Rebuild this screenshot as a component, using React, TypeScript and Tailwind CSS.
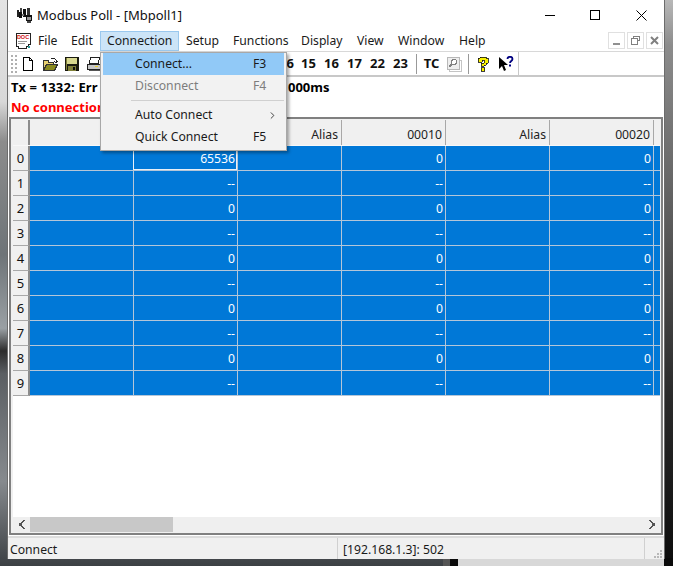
import { ChevronRight } from 'lucide-react'

const uiFont = "font-['Noto_Sans','Open_Sans',sans-serif]"

const menus = [
  { label: 'File', width: 'w-[33px]' },
  { label: 'Edit', width: 'w-[35px]' },
  { label: 'Connection', width: 'w-[79px]', active: true },
  { label: 'Setup', width: 'w-[47px] ml-px' },
  { label: 'Functions', width: 'w-[68px]' },
  { label: 'Display', width: 'w-[56px]' },
  { label: 'View', width: 'w-[41px]' },
  { label: 'Window', width: 'w-[61px]' },
  { label: 'Help', width: 'w-[39px]' },
]

const funcCodes = ['15', '16', '17', '22', '23']

// the first two headers are behind the open menu
const columns = ['', '', 'Alias', '00010', 'Alias', '00020']

// values only sit in the numeric columns
const rows = [0, 1, 2, 3, 4, 5, 6, 7, 8, 9].map((i) => {
  const empty = i % 2 === 1
  return { id: i, value: empty ? '--' : i === 0 ? '65536' : '0', other: empty ? '--' : '0' }
})

function AppIcon() {
  return (
    <svg width="17" height="17" viewBox="0 0 17 17" shapeRendering="crispEdges">
      <rect x="1" y="3" width="2" height="7" fill="#222" />
      <rect x="3" y="5" width="3" height="6" fill="#111" />
      <rect x="4" y="1" width="2" height="4" fill="#444" />
      <rect x="7" y="2" width="3" height="8" fill="#111" />
      <rect x="6" y="7" width="2" height="2" fill="#777" />
      <rect x="11" y="1" width="3" height="7" fill="#333" />
      <rect x="10" y="8" width="6" height="6" fill="#111" />
      <rect x="11" y="10" width="4" height="3" fill="#999" />
      <rect x="11" y="14" width="4" height="2" fill="#444" />
    </svg>
  )
}

function DocIcon() {
  return (
    <svg width="16" height="17" viewBox="0 0 16 17" shapeRendering="crispEdges">
      <path d="M1 1h14v11h-2v2h-2v2H3v-2H1z" fill="#fff" stroke="#222" />
      <text x="8" y="7" textAnchor="middle" fontSize="5.5" fontWeight="700" fill="#d01010" fontFamily="Liberation Sans">DOC</text>
      <rect x="3" y="9" width="9" height="1" fill="#999" />
      <rect x="3" y="11" width="7" height="1" fill="#999" />
      <rect x="13" y="14" width="2" height="2" fill="#2a9a9a" />
    </svg>
  )
}

function NewIcon() {
  return (
    <svg width="16" height="16" viewBox="0 0 16 16" shapeRendering="crispEdges">
      <path d="M3.5 1.5h6l3 3v10h-9z" fill="#fff" stroke="#000" />
      <path d="M9.5 1.5v3h3" fill="none" stroke="#000" />
    </svg>
  )
}

function OpenIcon() {
  return (
    <svg width="16" height="16" viewBox="0 0 16 16" shapeRendering="crispEdges">
      <path d="M1.5 4.5h5v2h5v8h-10z" fill="#e8d070" stroke="#333" />
      <path d="M1.5 14.5l3-6h11l-3 6z" fill="#8a8a20" stroke="#333" />
      <path d="M9 2h3l2 2v3M14 7l-2-2M14 7l2-2" fill="none" stroke="#222" />
    </svg>
  )
}

function SaveIcon() {
  return (
    <svg width="16" height="16" viewBox="0 0 16 16" shapeRendering="crispEdges">
      <rect x="1" y="1" width="14" height="14" fill="#1a1a10" />
      <rect x="3" y="2" width="10" height="6" fill="#d8d890" />
      <rect x="2" y="2" width="1" height="12" fill="#80803a" />
      <rect x="4" y="10" width="8" height="5" fill="#80803a" />
      <rect x="9" y="11" width="2" height="3" fill="#111" />
    </svg>
  )
}

function PrintIcon() {
  return (
    <svg width="16" height="16" viewBox="0 0 16 16" shapeRendering="crispEdges">
      <path d="M4.5 1.5h9l-1 6h-9z" fill="#fff" stroke="#222" />
      <path d="M1.5 8.5h13v5h-13z" fill="#c8c8c8" stroke="#222" />
      <rect x="9" y="10" width="3" height="1" fill="#e8d030" />
      <path d="M3 14.5h11" stroke="#555" />
    </svg>
  )
}

function PreviewIcon() {
  return (
    <svg width="16" height="16" viewBox="0 0 16 16" shapeRendering="crispEdges">
      <rect x="1.5" y="1.5" width="12" height="12" fill="#eee" stroke="#b8b8b8" />
      <path d="M13.5 4.5h2v11h-12v-2" fill="none" stroke="#c4c4c4" />
      <circle cx="8" cy="6" r="2.5" fill="#fff" stroke="#808080" />
      <path d="M6 8l-3 3" stroke="#808080" strokeWidth="1.5" />
    </svg>
  )
}

function HelpIcon() {
  return (
    <svg width="12" height="16" viewBox="0 0 12 16" shapeRendering="crispEdges">
      <path d="M3 1h6v1h2v5H9v2H7v1H4V7h3V4H5v2H1V2h2z" fill="#f8f000" stroke="#111" strokeWidth="0.8" />
      <rect x="4" y="11.5" width="3.5" height="3.5" fill="#f8f000" stroke="#111" strokeWidth="0.8" />
    </svg>
  )
}

function CursorHelpIcon() {
  return (
    <svg width="16" height="16" viewBox="0 0 16 16">
      <path d="M1 1v12l3-3 2 5 2-1-2-5h4z" fill="#000" />
      <path d="M9.5 3c0-3 5-3 5 0 0 2-2.500 2-2.500 4" fill="none" stroke="#000080" strokeWidth="1.800" />
      <rect x="11" y="8.500" width="2" height="2" fill="#000080" />
    </svg>
  )
}

function GripDots() {
  const dots = [[6, 0], [3, 3], [6, 3], [0, 6], [3, 6], [6, 6]]
  return (
    <svg width="8" height="8" viewBox="0 0 8 8" shapeRendering="crispEdges">
      {dots.map(([x, y]) => (
        <rect key={`${x}-${y}`} x={x} y={y} width="2" height="2" fill="#b8b8b8" />
      ))}
    </svg>
  )
}

function ConnectionMenu() {
  return (
    <div className={`absolute left-[100px] top-[52px] z-10 w-[187px] h-[99px] bg-[#f2f2f2] border border-[#a8a8a8] px-[2px] shadow-[2px_2px_3px_rgba(0,0,0,0.35)] text-[12.200px] text-[#1a1a1a] ${uiFont}`}>
      <div className="h-[22px] flex items-center bg-[#91c9f7] pl-[32px]">
        <span className="w-[118px]">Connect...</span>
        <span>F3</span>
      </div>
      <div className="h-[22px] flex items-center pl-[32px] text-[#7d7d7d]">
        <span className="w-[118px]">Disconnect</span>
        <span>F4</span>
      </div>
      <div className="h-[7px] ml-[28px] flex items-center">
        <div className="w-full h-px bg-[#d0d0d0]" />
      </div>
      <div className="h-[22px] flex items-center pl-[32px]">
        <span className="w-[132px]">Auto Connect</span>
        <ChevronRight size={11} strokeWidth={2} className="text-[#333]" />
      </div>
      <div className="h-[22px] flex items-center pl-[32px]">
        <span className="w-[118px]">Quick Connect</span>
        <span>F5</span>
      </div>
    </div>
  )
}

function DataGrid() {
  return (
    <div className={`flex-1 min-h-0 flex flex-col bg-white text-[12.200px] ${uiFont}`}>
      {/* header row */}
      <div className="flex h-[26px] shrink-0 border-b border-[#f8f8f8]">
        <div className="w-[17px] bg-[#f0f0f0] border-r-2 border-[#8c8c8c]" />
        {columns.map((col, i) => (
          <div key={i} className="w-[104px] bg-[#f0f0f0] border-r border-[#a8a8a8] flex items-center justify-end pr-[3px] pt-[6px] text-[#222]">
            {col}
          </div>
        ))}
        <div className="flex-1 bg-[#f0f0f0]" />
      </div>
      {/* data rows */}
      {rows.map((row) => (
        <div key={row.id} className="flex h-[25px] shrink-0">
          <div className="w-[17px] bg-[#f0f0f0] border-r-2 border-b border-r-[#8c8c8c] border-b-[#a8a8a8] flex items-center justify-center pt-[2px] text-[13px] text-[#111]">
            {row.id}
          </div>
          {columns.map((col, i) => {
            const numeric = i % 2 === 1
            const text = numeric ? (i === 1 ? row.value : row.other) : ''
            const focused = row.id === 0 && i === 1
            return (
              <div key={i} className="w-[104px] bg-[#0078d7] border-r border-b border-[#b4c6d8] flex items-center justify-end pr-[2px] pt-[2px] text-white relative">
                {focused && <div className="absolute inset-0 -left-px border border-[#e8f0f8]" />}
                {text}
              </div>
            )
          })}
          <div className="flex-1 bg-[#0078d7] border-b border-[#b4c6d8]" />
        </div>
      ))}
      <div className="flex-1" />
      {/* scroll bar */}
      <div className="h-[15px] shrink-0 flex bg-[#efefef]">
        <div className="w-[17px] flex items-center justify-center text-[#555]">
          <svg width="8" height="9" viewBox="0 0 8 9" shapeRendering="crispEdges">
            <path d="M5 0h2v1H6v1H5v1H4v3h1v1h1v1h1v1H5V8H4V7H3V6H1V3h2V2h1V1h1z" fill="#555" />
          </svg>
        </div>
        <div className="w-[143px] bg-[#c8c8c8]" />
        <div className="flex-1" />
        <div className="w-[16px] flex items-center justify-center">
          <svg width="8" height="9" viewBox="0 0 8 9" shapeRendering="crispEdges">
            <path d="M1 0h2v1h1v1h1v1h2v3H5v1H4v1H3v1H1V8h1V7h1V6h1V3H3V2H2V1H1z" fill="#555" />
          </svg>
        </div>
      </div>
    </div>
  )
}

export default function App() {
  return (
    <div className="relative w-[673px] h-[566px] overflow-hidden bg-[linear-gradient(180deg,#e4e4e4_0%,#d8d8d8_18%,#8c8c8c_25%,#6e7478_45%,#9aa0a4_58%,#2c2c2c_62%,#5a5e62_66%,#868a8e_85%,#3c4044_100%)]">
      {/* what shows of the desktop on the right and below */}
      <div className="absolute right-0 top-0 w-[8px] h-full bg-[linear-gradient(180deg,#b8b8b8_0%,#8c8c8c_8%,#6a6a6a_30%,#2a2a2a_70%,#0c0c0c_100%)]" />
      <div className="absolute left-[443px] right-0 bottom-0 h-[8px] flex">
        <div className="w-[7px] bg-[#555]" />
        <div className="w-[8px] bg-[#0a0a0a]" />
        <div className="flex-1 bg-[#d8d8d8]" />
        <div className="w-[9px] bg-[#0a0a0a]" />
      </div>

      <div className={`relative ml-[7px] w-[658px] h-[559px] bg-white border-l border-r border-b border-[#6c6c6c] flex flex-col ${uiFont}`}>
        {/* title bar */}
        <div className="h-[30px] shrink-0 flex items-center pl-[8px]">
          <AppIcon />
          <span className="ml-[4px] pt-[1px] text-[13px] text-[#111]">Modbus Poll - [Mbpoll1]</span>
          <div className="ml-auto flex items-center">
            <div className="w-[45px] flex justify-center"><div className="w-[10px] h-px bg-black" /></div>
            <div className="w-[46px] flex justify-center"><div className="w-[10px] h-[10px] border border-black" /></div>
            <div className="w-[46px] flex justify-center">
              <svg width="11" height="11" viewBox="0 0 11 11"><path d="M.5.5l10 10M10.500.5l-10 10" stroke="#000" fill="none" /></svg>
            </div>
          </div>
        </div>

        {/* menu bar */}
        <div className="h-[21px] shrink-0 flex items-center pl-[7px] text-[12.200px] text-[#1a1a1a]">
          <div className="w-[17px]"><DocIcon /></div>
          {menus.map((m) => (
            <div key={m.label} className={`${m.width} h-[20px] pl-[6px] pt-[1px] flex items-center ${m.active ? 'bg-[#cce4f7] border border-[#9ac8ee]' : ''}`}>
              {m.label}
            </div>
          ))}
          <div className="ml-auto flex gap-[2px] pr-[1px]">
            <div className="w-[17px] h-[17px] border border-[#e0e0e0] flex items-end justify-center pb-[3px]"><div className="w-[7px] h-[2px] bg-[#909090]" /></div>
            <div className="w-[17px] h-[17px] border border-[#e0e0e0] flex items-center justify-center">
              <svg width="9" height="9" viewBox="0 0 9 9" shapeRendering="crispEdges"><path d="M2.500 2.500v-2h6v4h-2M.5 2.500h6v6h-6z" fill="none" stroke="#808080" /></svg>
            </div>
            <div className="w-[17px] h-[17px] border border-[#e0e0e0] flex items-center justify-center">
              <svg width="9" height="9" viewBox="0 0 9 9"><path d="M1 1l7 7M8 1L1 8" stroke="#808080" strokeWidth="2" fill="none" /></svg>
            </div>
          </div>
        </div>
        <div className="h-px shrink-0 bg-[#d8d8d8]" />

        {/* toolbar */}
        <div className="h-[25px] shrink-0 flex items-center text-[13px] font-bold text-[#111] border-b-2 border-[#c8c8c8]">
          <div className="w-[9px] ml-[2px] h-[20px] bg-[radial-gradient(#b0b0b0_1px,transparent_1.200px)] bg-[length:4px_4px]" />
          <div className="w-[17px] flex justify-center"><NewIcon /></div>
          <div className="w-[28px] flex justify-center"><OpenIcon /></div>
          <div className="w-[16px] flex justify-center"><SaveIcon /></div>
          <div className="w-[28px] flex justify-center"><PrintIcon /></div>
          <div className="w-[166px]" />
          <div className="w-[23px] text-right pr-[3px] pt-[1px]">6</div>
          {funcCodes.map((code) => (
            <div key={code} className="w-[23px] text-center pt-[1px]">{code}</div>
          ))}
          <div className="w-px h-[20px] bg-[#999] ml-[4px]" />
          <div className="w-[27px] text-center ml-[1px] pt-[1px]">TC</div>
          <div className="w-[18px] flex justify-center"><PreviewIcon /></div>
          <div className="w-px h-[20px] bg-[#999] ml-[5px]" />
          <div className="w-[20px] flex justify-center ml-[4px]"><HelpIcon /></div>
          <div className="w-[25px] flex justify-center"><CursorHelpIcon /></div>
          <div className="w-px h-[24px] bg-[#c8c8c8]" />
        </div>

        {/* connection status */}
        <div className="h-[40px] shrink-0 border-l-2 border-[#f0f0f0] pl-[1px] bg-white text-[13px] font-bold leading-[20px]">
          <div className="flex text-black whitespace-nowrap">
            <span className="w-[277px] tracking-[0.15px]">Tx = 1332: Err</span>
            <span>000ms</span>
          </div>
          <div className="text-[#ff0000]">No connection</div>
        </div>

        {/* child window frame */}
        <div className="h-[418px] shrink-0 mx-px border-2 border-[#808080] p-[1px] pl-[2px] bg-[#f0f0f0] flex flex-col">
          <DataGrid />
        </div>

        {/* status bar */}
        <div className="flex-1 flex items-center bg-[#f0f0f0] border-t-2 border-[#dcdcdc] text-[12.200px] text-[#1a1a1a] mt-px">
          <span className="w-[329px] pl-[2px] pt-[3px]">Connect</span>
          <div className="w-[307px] h-full border-l border-[#d0d0d0] pl-[5px] pt-[3px] flex items-center">[192.168.1.3]: 502</div>
          <div className="h-full flex-1 border-l border-[#d0d0d0] flex items-end justify-end pr-[2px] pb-[1px]"><GripDots /></div>
        </div>
      </div>

      <ConnectionMenu />
    </div>
  )
}
